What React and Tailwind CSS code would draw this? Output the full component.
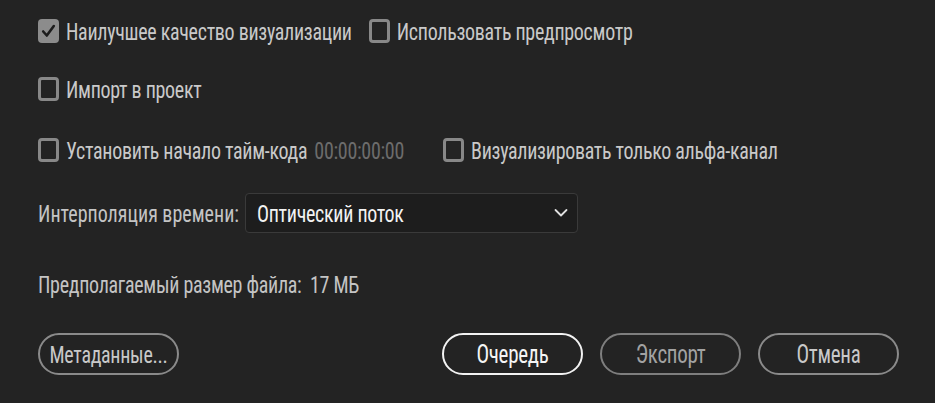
function T({ children, className = '' }) {
  return <span className={'inline-block scale-y-[1.22] origin-center leading-6 ' + className}>{children}</span>;
}

function Box({ checked }) {
  if (checked) {
    return (
      <span className="flex h-[24px] w-[21px] shrink-0 items-center justify-center rounded-[4px] bg-[#8c8c8c]">
        <svg width="15" height="16" viewBox="0 0 15 16" fill="none">
          <path d="M2.2 8.5 L5.8 12.5 L12.8 3" stroke="#1c1c1c" strokeWidth="2.6" strokeLinecap="round" strokeLinejoin="round" />
        </svg>
      </span>
    );
  }
  return <span className="block h-[24px] w-[21px] shrink-0 rounded-[4px] border-[3px] border-[#888888]" />;
}

function Check({ checked, label, className = '' }) {
  return (
    <div className={'flex h-[24px] items-center gap-[7px] ' + className}>
      <Box checked={checked} />
      <T className="text-[#c9c9c9]">{label}</T>
    </div>
  );
}

function Btn({ children, variant = 'normal', className = '', textClass = 'text-[21px]' }) {
  const v =
    variant === 'primary'
      ? 'border-[#f2f2f2] text-[#f5f5f5]'
      : variant === 'dim'
      ? 'border-[#7e7e7e] text-[#a2a2a2]'
      : 'border-[#8a8a8a] text-[#c9c9c9]';
  return (
    <div className={'flex h-[42px] w-[141px] items-center justify-center rounded-full border-2 ' + v + ' ' + className}>
      <T className={textClass}>{children}</T>
    </div>
  );
}

export default function App() {
  return (
    <div
      className="flex h-[403px] w-[935px] flex-col bg-[#232323] pl-[38px] pr-[36px] text-[20px] tracking-[-0.3px]"
      style={{ fontFamily: '"Roboto Condensed", Roboto, sans-serif' }}
    >
      <div className="mt-[19px] flex items-center">
        <Check checked label="Наилучшее качество визуализации" />
        <Check label="Использовать предпросмотр" className="ml-[17px]" />
      </div>
      <div className="mt-[34px] flex items-center">
        <Check label="Импорт в проект" />
      </div>
      <div className="mt-[37px] flex items-center">
        <Check label="Установить начало тайм-кода" />
        <T className="ml-[7px] text-[#6c6c6c]">00:00:00:00</T>
        <Check label="Визуализировать только альфа-канал" className="ml-[39px]" />
      </div>
      <div className="mt-[31px] flex items-center">
        <T className="text-[#c4c4c4] tracking-[0px]">Интерполяция времени:</T>
        <div className="ml-[6px] flex h-[40px] w-[333px] items-center justify-between rounded-[4px] border border-[#3a3a3a] bg-[#1d1d1d] pl-[11px] pr-[8px]">
          <T className="text-[#f2f2f2]">Оптический поток</T>
          <svg width="16" height="10" viewBox="0 0 16 10" fill="none">
            <path d="M2.5 2 L8 7.5 L13.5 2" stroke="#e0e0e0" strokeWidth="1.8" strokeLinecap="round" strokeLinejoin="round" />
          </svg>
        </div>
      </div>
      <div className="mt-[39px] flex items-center">
        <T className="text-[#c4c4c4]">Предполагаемый размер файла:&nbsp; 17 МБ</T>
      </div>
      <div className="mt-[37px] flex items-center">
        <Btn textClass="text-[20px]">Метаданные...</Btn>
        <div className="ml-auto flex gap-[17px]">
          <Btn variant="primary">Очередь</Btn>
          <Btn variant="dim">Экспорт</Btn>
          <Btn>Отмена</Btn>
        </div>
      </div>
    </div>
  );
}
